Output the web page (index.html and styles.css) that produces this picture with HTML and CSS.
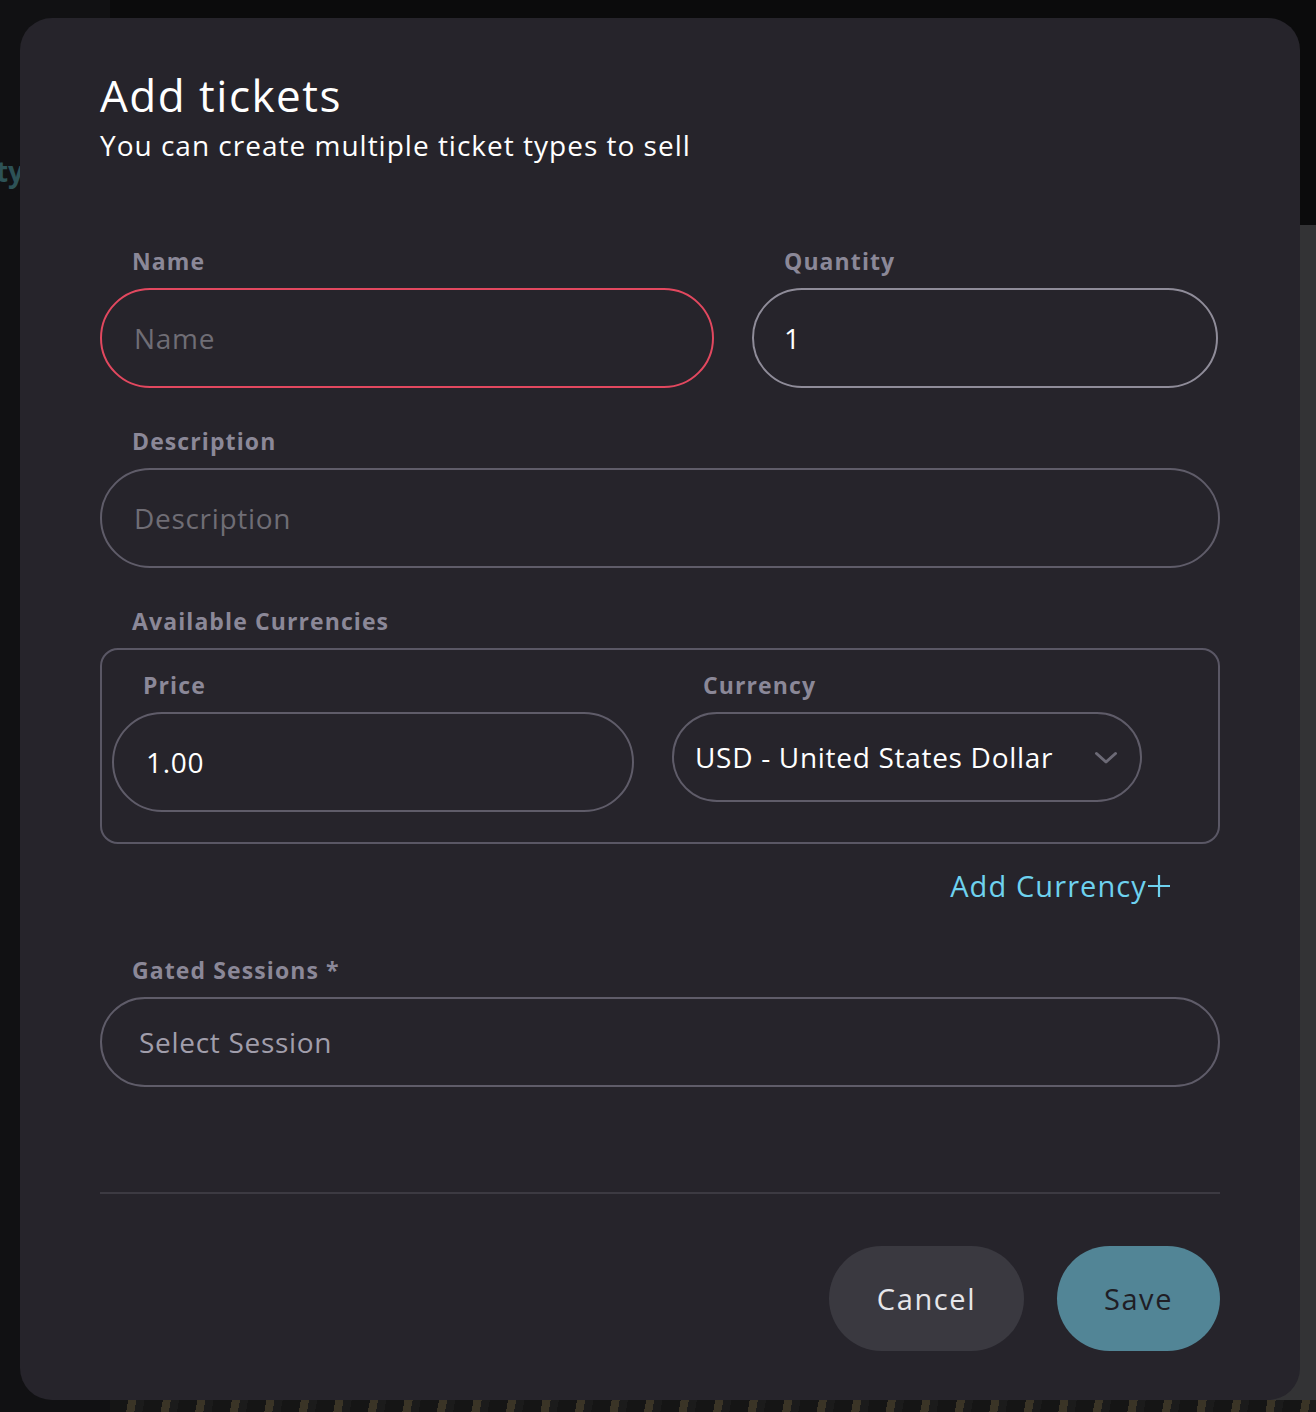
FILE: index.html
```html
<!DOCTYPE html>
<html lang="en">
<head>
<meta charset="utf-8">
<title>Add tickets</title>
<link rel="stylesheet" href="styles.css">
</head>
<body>
<div class="backdrop">
  <aside class="sidebar">
    <div class="side-title">Community</div>
    <div class="side-dots">•••</div>
  </aside>
  <main class="page">
    <div class="page-top"></div>
    <div class="page-body">
      <div class="page-strip"></div>
    </div>
  </main>
</div>

<div class="modal" role="dialog" aria-labelledby="modal-title">
  <header class="modal-head">
    <h1 id="modal-title" class="modal-title">Add tickets</h1>
    <p class="modal-sub">You can create multiple ticket types to sell</p>
  </header>

  <form class="form">
    <div class="row">
      <div class="field field-name">
        <label class="label">Name</label>
        <div class="input input-error"><span class="placeholder">Name</span></div>
      </div>
      <div class="field field-qty">
        <label class="label">Quantity</label>
        <div class="input input-focus"><span class="value">1</span></div>
      </div>
    </div>

    <div class="field">
      <label class="label">Description</label>
      <div class="input"><span class="placeholder">Description</span></div>
    </div>

    <div class="field">
      <label class="label">Available Currencies</label>
      <div class="currency-box">
        <div class="field field-price">
          <label class="label">Price</label>
          <div class="input"><span class="value">1.00</span></div>
        </div>
        <div class="field field-currency">
          <label class="label">Currency</label>
          <div class="select">
            <span class="value">USD - United States Dollar</span>
            <svg class="chevron" width="24" height="14" viewBox="0 0 24 14" aria-hidden="true">
              <path d="M2.5 2.5 L12 11 L21.5 2.5" fill="none" stroke="#6c6a76" stroke-width="3" stroke-linecap="round" stroke-linejoin="round"/>
            </svg>
          </div>
        </div>
      </div>
    </div>

    <div class="add-row">
      <a class="add-currency" href="#">Add Currency<svg class="plus" width="24" height="24" viewBox="0 0 24 24" aria-hidden="true"><path d="M12 1 V23 M1 12 H23" stroke="#6ed2ef" stroke-width="2.2" fill="none"/></svg></a>
    </div>

    <div class="field field-gated">
      <label class="label">Gated Sessions *</label>
      <div class="input input-session"><span class="placeholder placeholder-light">Select Session</span></div>
    </div>
  </form>

  <footer class="modal-foot">
    <button class="btn btn-cancel" type="button">Cancel</button>
    <button class="btn btn-save" type="button">Save</button>
  </footer>
</div>
</body>
</html>
```

FILE: styles.css
```css
* { box-sizing: border-box; }

html, body {
  margin: 0;
  padding: 0;
  width: 1316px;
  height: 1412px;
  overflow: hidden;
  background: #0b0b0c;
  font-family: "Open Sans", "Liberation Sans", sans-serif;
}

/* page behind the dialog */
.backdrop {
  display: flex;
  width: 1316px;
  height: 1412px;
}
.sidebar {
  width: 110px;
  background: #111113;
  display: flex;
  flex-direction: column;
  align-items: flex-end;
  padding-top: 152px;
  overflow: hidden;
}
.side-title {
  margin-right: 86px;
  color: #2d5256;
  font-weight: 700;
  font-size: 28px;
  white-space: nowrap;
}
.side-dots {
  margin-top: 50px;
  margin-right: 60px;
  color: #4a4a4e;
  font-size: 16px;
  letter-spacing: 2px;
}
.page {
  flex: 1;
  display: flex;
  flex-direction: column;
}
.page-top { height: 225px; background: #0b0b0c; }
.page-body {
  flex: 1;
  display: flex;
  flex-direction: column;
  justify-content: flex-end;
  align-items: flex-end;
  background: linear-gradient(to right, #0b0b0c 0 80px, #333335 80px);
}
.page-strip {
  width: 100%;
  height: 12px;
  background:
    repeating-linear-gradient(100deg, #151515 0 18px, #3a3426 18px 26px, #1b1b1b 26px 34px);
}

/* dialog */
.modal {
  position: absolute;
  left: 20px;
  top: 18px;
  width: 1280px;
  height: 1382px;
  background: #26242b;
  border-radius: 32px;
  padding: 0 80px;
  display: flex;
  flex-direction: column;
  color: #ffffff;
}

.modal-head { padding-top: 49px; }
.modal-title {
  margin: 0;
  font-size: 44px;
  line-height: 56px;
  font-weight: 400;
  letter-spacing: 1.5px;
  color: #ffffff;
}
.modal-sub {
  margin: 4px 0 0;
  font-size: 28px;
  line-height: 36px;
  letter-spacing: 1px;
  color: #ffffff;
}

.form {
  margin-top: 83px;
  display: flex;
  flex-direction: column;
}

.row {
  display: flex;
  gap: 38px;
}
.field {
  display: flex;
  flex-direction: column;
}
.form > .field { margin-top: 38px; }
.form > .field:first-child { margin-top: 0; }

.field-name { width: 614px; }
.field-qty { width: 466px; }

.label {
  display: block;
  padding-left: 32px;
  font-size: 23px;
  line-height: 30px;
  font-weight: 700;
  letter-spacing: 1.1px;
  color: #8b8898;
  margin-bottom: 12px;
}

.input, .select {
  height: 100px;
  border: 2px solid #5f5c69;
  border-radius: 50px;
  display: flex;
  align-items: center;
  padding: 0 32px;
  font-size: 28px;
  letter-spacing: 0.7px;
}
.input-error { border-color: #e2485f; }
.input-focus { border-color: #8f8c99; padding-left: 30px; }
.placeholder { color: #6f6d75; }
.placeholder-light { color: #a19eab; }
.value { color: #ffffff; }

.currency-box {
  border: 2px solid #5a5765;
  border-radius: 18px;
  display: flex;
  gap: 38px;
  padding: 20px 10px 30px;
}
.field-price { width: 522px; }
.field-currency { width: 470px; }
.field-price .label,
.field-currency .label { padding-left: 31px; }
.select {
  height: 90px;
  border-radius: 45px;
  padding: 0 22px 0 21px;
  justify-content: space-between;
}
.chevron { margin-top: 2px; }

.add-row {
  display: flex;
  justify-content: flex-end;
  padding-right: 49px;
  margin-top: 24px;
}
.add-currency {
  display: flex;
  align-items: center;
  color: #6ed2ef;
  text-decoration: none;
  font-size: 29px;
  line-height: 36px;
  letter-spacing: 1.1px;
}
.plus { margin-left: 0; }

.form > .field-gated { margin-top: 51px; }
.input-session { height: 90px; border-radius: 45px; padding-left: 37px; }

.modal-foot {
  margin-top: 105px;
  border-top: 2px solid #3c3a42;
  display: flex;
  justify-content: flex-end;
  gap: 33px;
  padding-top: 52px;
}
.btn {
  height: 105px;
  border: none;
  border-radius: 53px;
  font-family: inherit;
  font-size: 29px;
  letter-spacing: 1.6px;
  cursor: pointer;
}
.btn-cancel {
  width: 195px;
  background: #3a3940;
  color: #e6e6ea;
}
.btn-save {
  width: 163px;
  background: #528596;
  color: #1f1e25;
}
```
